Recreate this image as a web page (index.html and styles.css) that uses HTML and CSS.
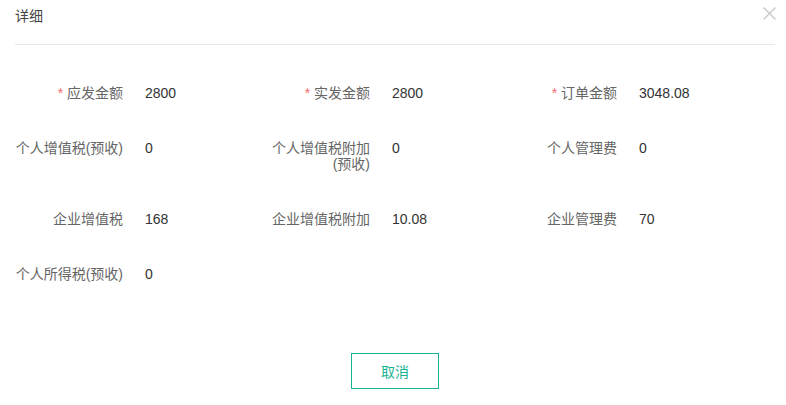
FILE: index.html
```html
<!DOCTYPE html>
<html lang="zh-CN">
<head>
<meta charset="utf-8">
<title>详细</title>
<link rel="stylesheet" href="styles.css">
</head>
<body>
<div class="dialog">
  <div class="header">
    <span class="title">详细</span>
    <span class="close" aria-label="关闭">
      <svg width="13" height="13" viewBox="0 0 13 13"><path d="M0.5 0.5 L12.5 12.5 M12.5 0.5 L0.5 12.5" stroke="#c6c6c6" stroke-width="1.2" fill="none"/></svg>
    </span>
  </div>
  <div class="form">
    <div class="item"><div class="label"><span class="req">*</span> 应发金额</div><div class="value">2800</div></div>
    <div class="item"><div class="label"><span class="req">*</span> 实发金额</div><div class="value">2800</div></div>
    <div class="item"><div class="label"><span class="req">*</span> 订单金额</div><div class="value">3048.08</div></div>

    <div class="item"><div class="label">个人增值税(预收)</div><div class="value">0</div></div>
    <div class="item"><div class="label">个人增值税附加(预收)</div><div class="value">0</div></div>
    <div class="item"><div class="label">个人管理费</div><div class="value">0</div></div>

    <div class="item"><div class="label">企业增值税</div><div class="value">168</div></div>
    <div class="item"><div class="label">企业增值税附加</div><div class="value">10.08</div></div>
    <div class="item"><div class="label">企业管理费</div><div class="value">70</div></div>

    <div class="item"><div class="label">个人所得税(预收)</div><div class="value">0</div></div>
  </div>
  <div class="footer">
    <button class="btn" type="button">取消</button>
  </div>
</div>
</body>
</html>
```
FILE: styles.css
```css
html, body {
  margin: 0;
  padding: 0;
  background: #fff;
}
body {
  font-family: "Liberation Sans", "Noto Sans CJK SC", sans-serif;
  font-size: 14px;
  color: #333;
}
.dialog {
  position: relative;
  width: 786px;
  height: 405px;
  box-sizing: border-box;
  padding: 0 11px 0 15px;
}
.header {
  height: 44px;
  border-bottom: 1px solid #e8e8e8;
  box-sizing: content-box;
}
.title {
  display: inline-block;
  padding-top: 6px;
  line-height: 20px;
  font-size: 14px;
  color: #444;
}
.close {
  position: absolute;
  top: 7px;
  left: 763px;
  width: 13px;
  height: 13px;
  display: block;
}
.close svg { display: block; }
.form {
  display: grid;
  grid-template-columns: 247px 247px 247px;
  row-gap: 39px;
  padding-top: 40px;
  align-items: start;
}
.item {
  display: flex;
  align-items: flex-start;
  line-height: 16px;
}
.label {
  width: 108px;
  flex: none;
  text-align: right;
  color: #666;
  margin-right: 22px;
}
.req {
  color: #f56c6c;
}
.value {
  color: #333;
}
.footer {
  display: flex;
  justify-content: center;
  padding-top: 71px;
}
.btn {
  width: 88px;
  height: 36px;
  box-sizing: border-box;
  border: 1px solid #18b394;
  background: #fff;
  color: #18b394;
  font-family: "Liberation Sans", "Noto Sans CJK SC", sans-serif;
  font-size: 14px;
  padding: 0;
  border-radius: 0;
}
```
